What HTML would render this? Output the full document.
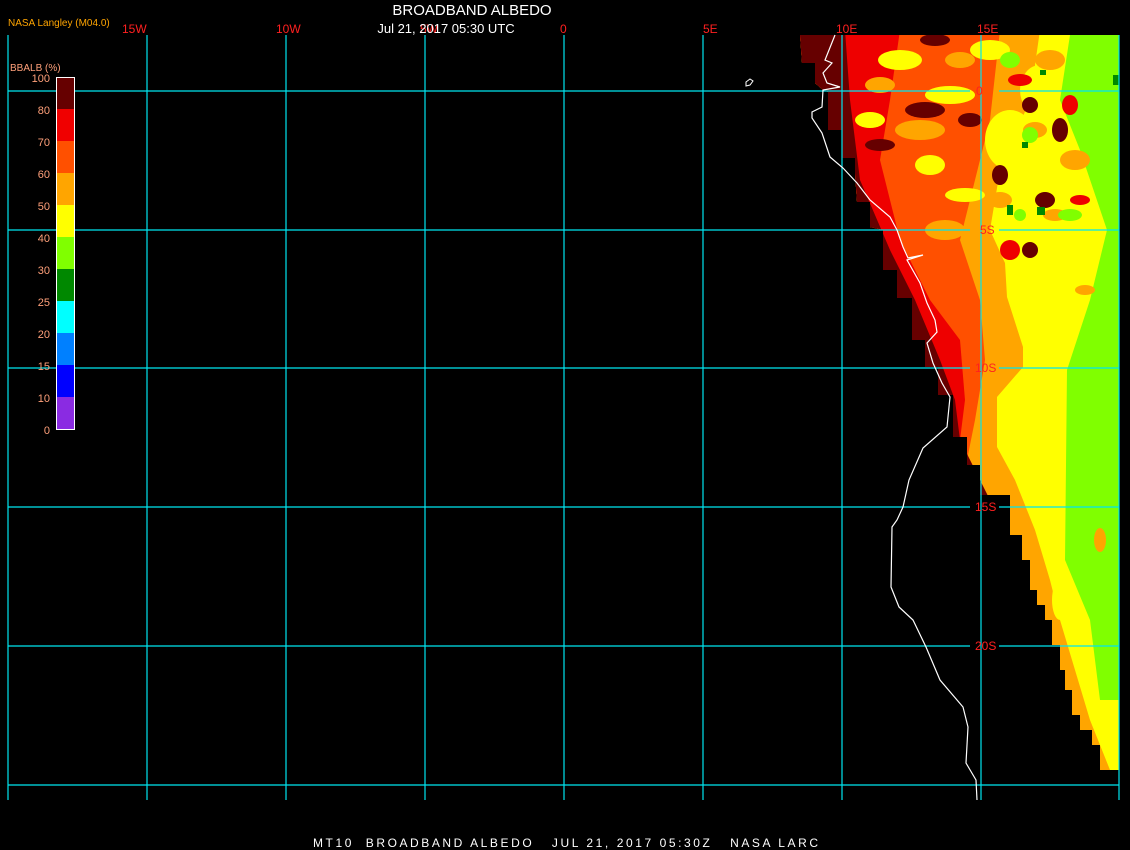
<!DOCTYPE html>
<html><head><meta charset="utf-8"><style>
html,body{margin:0;padding:0;background:#000;width:1130px;height:850px;overflow:hidden}
svg{display:block}
text{font-family:"Liberation Sans",sans-serif}
</style></head><body>
<svg width="1130" height="850" viewBox="0 0 1130 850" xmlns="http://www.w3.org/2000/svg">
<rect width="1130" height="850" fill="#000"/>
<defs>
<clipPath id="land">
<polygon points="800,35 802,63 815,63 815,83 823,90 828,92 828,130 842,130 842,158 855,158 855,173 857,202 870,202 870,227 883,230 883,270 897,270 897,298 912,298 912,340 925,340 925,367 938,367 938,395 953,395 953,437 967,437 967,465 980,465 980,495 1010,495 1010,535 1022,535 1022,560 1030,560 1030,590 1037,590 1037,605 1045,605 1045,620 1052,620 1052,645 1060,645 1060,670 1065,670 1065,690 1072,690 1072,715 1080,715 1080,730 1092,730 1092,745 1100,745 1100,770 1119,770 1119,35"/>
</clipPath>
</defs>
<g clip-path="url(#land)">
<rect x="790" y="30" width="340" height="750" fill="#ffff00"/>
<polygon points="1107,35 1070,35 1060,100 1080,150 1107,230 1090,300 1067,370 1065,560 1090,620 1100,700 1119,700 1119,35" fill="#80ff00"/>
<polygon points="790,30 1040,30 1030,100 1000,170 990,230 1005,263 1007,297 1023,347 1023,367 997,397 997,447 1015,480 1035,530 1050,580 1060,620 1075,670 1090,720 1110,770 790,780" fill="#ffa500"/>
<polygon points="790,30 1000,30 990,120 970,200 960,240 980,300 985,360 975,420 965,470 990,500 1015,560 1030,620 1045,680 1060,730 1075,770 790,780" fill="#ff5000"/>
<polygon points="790,30 900,30 890,100 880,160 900,240 930,300 960,340 965,400 960,440 975,470 1000,540 1015,600 1025,640 1040,700 1050,760 790,780" fill="#ee0000"/>
<polygon points="790,30 845,30 850,100 860,180 890,250 915,300 940,360 955,400 960,440 980,480 1000,520 790,780" fill="#660000"/>
<g fill="#ffff00">
<ellipse cx="900" cy="60" rx="22" ry="10"/><ellipse cx="950" cy="95" rx="25" ry="9"/><ellipse cx="870" cy="120" rx="15" ry="8"/>
<ellipse cx="990" cy="50" rx="20" ry="10"/><ellipse cx="930" cy="165" rx="15" ry="10"/><ellipse cx="965" cy="195" rx="20" ry="7"/>
<ellipse cx="1010" cy="140" rx="25" ry="30"/><ellipse cx="1050" cy="180" rx="25" ry="25"/><ellipse cx="1040" cy="90" rx="20" ry="25"/>
<ellipse cx="1050" cy="520" rx="10" ry="20"/><ellipse cx="1060" cy="600" rx="8" ry="20"/>
</g>
<g fill="#ffa500">
<ellipse cx="880" cy="85" rx="15" ry="8"/><ellipse cx="920" cy="130" rx="25" ry="10"/><ellipse cx="960" cy="60" rx="15" ry="8"/>
<ellipse cx="1050" cy="60" rx="15" ry="10"/><ellipse cx="1035" cy="130" rx="12" ry="8"/><ellipse cx="1075" cy="160" rx="15" ry="10"/>
<ellipse cx="1000" cy="200" rx="12" ry="8"/><ellipse cx="1055" cy="215" rx="12" ry="6"/><ellipse cx="945" cy="230" rx="20" ry="10"/>
<ellipse cx="1085" cy="290" rx="10" ry="5"/><ellipse cx="1100" cy="540" rx="6" ry="12"/>
</g>
<g fill="#660000">
<ellipse cx="925" cy="110" rx="20" ry="8"/><ellipse cx="880" cy="145" rx="15" ry="6"/><ellipse cx="970" cy="120" rx="12" ry="7"/>
<ellipse cx="935" cy="40" rx="15" ry="6"/><ellipse cx="1030" cy="105" rx="8" ry="8"/><ellipse cx="1060" cy="130" rx="8" ry="12"/>
<ellipse cx="1000" cy="175" rx="8" ry="10"/><ellipse cx="1045" cy="200" rx="10" ry="8"/><ellipse cx="1030" cy="250" rx="8" ry="8"/>
</g>
<g fill="#ee0000">
<ellipse cx="1020" cy="80" rx="12" ry="6"/><ellipse cx="1070" cy="105" rx="8" ry="10"/><ellipse cx="1010" cy="250" rx="10" ry="10"/><ellipse cx="1080" cy="200" rx="10" ry="5"/>
</g>
<g fill="#80ff00">
<ellipse cx="1010" cy="60" rx="10" ry="8"/><ellipse cx="1030" cy="135" rx="8" ry="8"/><ellipse cx="1070" cy="215" rx="12" ry="6"/><ellipse cx="1020" cy="215" rx="6" ry="6"/>
</g>
<g fill="#008800">
<rect x="1040" y="70" width="6" height="5"/><rect x="1037" y="207" width="8" height="8"/><rect x="1007" y="205" width="6" height="10"/><rect x="1022" y="142" width="6" height="6"/><rect x="1113" y="75" width="6" height="10"/>
</g>
</g>
<g stroke="#00e5f0" stroke-width="1.2">
<line x1="8" y1="35" x2="8" y2="800"/><line x1="147" y1="35" x2="147" y2="800"/><line x1="286" y1="35" x2="286" y2="800"/>
<line x1="425" y1="35" x2="425" y2="800"/><line x1="564" y1="35" x2="564" y2="800"/><line x1="703" y1="35" x2="703" y2="800"/>
<line x1="842" y1="35" x2="842" y2="800"/><line x1="981" y1="35" x2="981" y2="800"/><line x1="1119" y1="35" x2="1119" y2="800"/>
<line x1="8" y1="91" x2="970" y2="91"/><line x1="999" y1="91" x2="1119" y2="91"/>
<line x1="8" y1="230" x2="970" y2="230"/><line x1="999" y1="230" x2="1119" y2="230"/>
<line x1="8" y1="368" x2="970" y2="368"/><line x1="999" y1="368" x2="1119" y2="368"/>
<line x1="8" y1="507" x2="970" y2="507"/><line x1="999" y1="507" x2="1119" y2="507"/>
<line x1="8" y1="646" x2="970" y2="646"/><line x1="999" y1="646" x2="1119" y2="646"/>
<line x1="8" y1="785" x2="1119" y2="785"/>
</g>
<polyline fill="none" stroke="#fff" stroke-width="1.2" points="835,35 825,60 832,63 823,73 827,83 840,87 823,90 822,107 812,112 812,118 822,133 830,157 843,168 857,183 870,200 890,217 897,230 903,247 908,258 923,255 907,260 920,283 927,303 935,320 937,332 927,343 933,363 942,383 950,397 947,427 923,448 909,480 903,507 897,520 892,527 891,587 899,607 913,620 926,647 940,680 963,707 968,727 966,763 976,780 977,800"/>
<path d="M746,82 l4,-3 3,2 -3,4 -4,1z" fill="none" stroke="#fff" stroke-width="1"/>
<g>
<rect x="56" y="77" width="19" height="32" fill="#660000"/>
<rect x="56" y="109" width="19" height="32" fill="#f00000"/>
<rect x="56" y="141" width="19" height="32" fill="#ff5000"/>
<rect x="56" y="173" width="19" height="32" fill="#ffa500"/>
<rect x="56" y="205" width="19" height="32" fill="#ffff00"/>
<rect x="56" y="237" width="19" height="32" fill="#80ff00"/>
<rect x="56" y="269" width="19" height="32" fill="#008800"/>
<rect x="56" y="301" width="19" height="32" fill="#00ffff"/>
<rect x="56" y="333" width="19" height="32" fill="#0080ff"/>
<rect x="56" y="365" width="19" height="32" fill="#0000ff"/>
<rect x="56" y="397" width="19" height="33" fill="#8a2be2"/>
<rect x="56.5" y="77.5" width="18" height="352" fill="none" stroke="#fff" stroke-width="1"/>
</g>
<g fill="#ffa07a" font-size="11" text-anchor="end">
<text x="50" y="82">100</text><text x="50" y="114">80</text><text x="50" y="146">70</text><text x="50" y="178">60</text>
<text x="50" y="210">50</text><text x="50" y="242">40</text><text x="50" y="274">30</text><text x="50" y="306">25</text>
<text x="50" y="338">20</text><text x="50" y="370">15</text><text x="50" y="402">10</text><text x="50" y="434">0</text>
</g>
<text x="10" y="71" fill="#ffa07a" font-size="10">BBALB (%)</text>
<text x="8" y="26" fill="#ffa500" font-size="10">NASA Langley (M04.0)</text>
<g fill="#ff2020" font-size="12" font-family="Liberation Mono,monospace">
<text x="122" y="33">15W</text><text x="276" y="33">10W</text><text x="420" y="33">5W</text><text x="560" y="33">0</text>
<text x="703" y="33">5E</text><text x="836" y="33">10E</text><text x="977" y="33">15E</text>
<text x="976" y="95">0</text><text x="980" y="234">5S</text><text x="975" y="372">10S</text><text x="975" y="511">15S</text><text x="975" y="650">20S</text>
</g>
<text x="472" y="15" fill="#fff" font-size="15" text-anchor="middle">BROADBAND ALBEDO</text>
<text x="446" y="33" fill="#fff" font-size="13" text-anchor="middle">Jul 21, 2017 05:30 UTC</text>
<text x="313" y="847" fill="#fff" font-size="12" font-family="Liberation Mono,monospace" xml:space="preserve" style="white-space:pre" textLength="505" lengthAdjust="spacing">MT10  BROADBAND ALBEDO   JUL 21, 2017 05:30Z   NASA LARC</text>
</svg>
</body></html>
